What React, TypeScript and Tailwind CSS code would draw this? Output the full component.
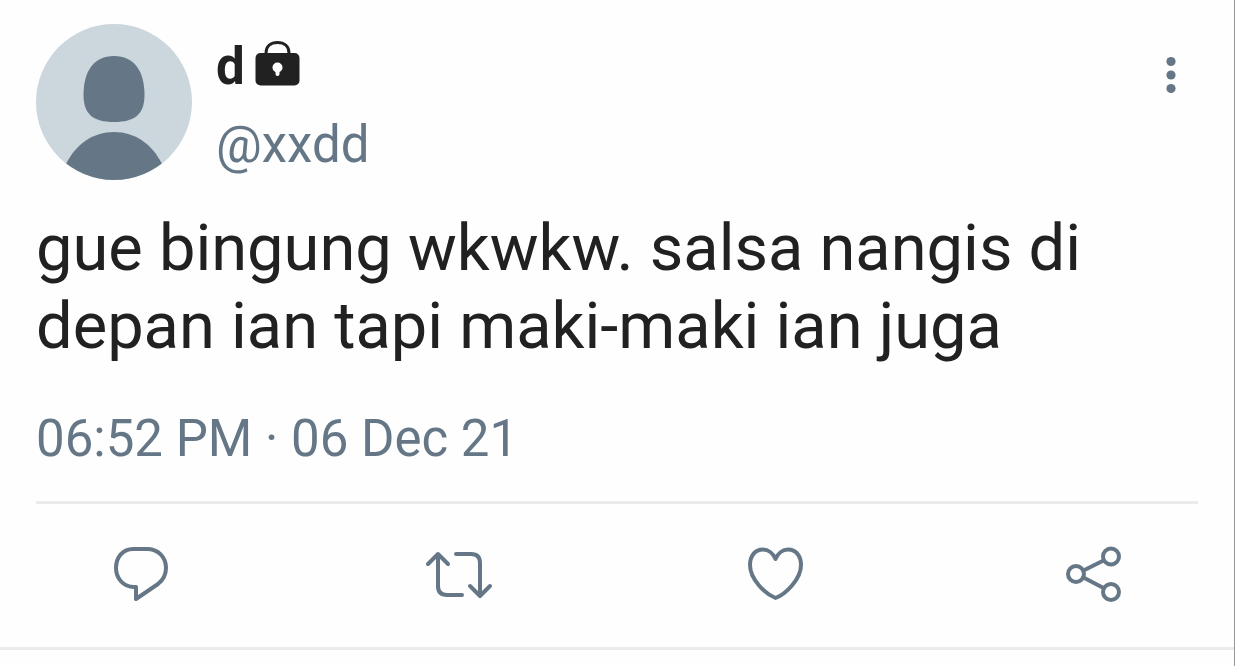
import React from "react";

interface ActionButtonProps {
  label: string;
  children: React.ReactNode;
}

const ActionButton: React.FC<ActionButtonProps> = ({ label, children }) => (
  <button type="button" aria-label={label} className="text-[#657786]">
    <svg
      viewBox="0 0 66 66"
      className="block h-[66px] w-[66px] overflow-visible"
      fill="none"
      stroke="currentColor"
      strokeWidth="4"
      strokeLinecap="round"
      strokeLinejoin="round"
      aria-hidden="true"
    >
      {children}
    </svg>
  </button>
);

const Avatar = () => (
  <svg
    viewBox="0 0 156 156"
    className="h-[156px] w-[156px] shrink-0 rounded-full"
    aria-hidden="true"
  >
    <rect width="156" height="156" fill="#ccd6dd" />
    <path
      d="M78 32C98 32 108.500 47 108.500 71C108.500 90 99 98 78 98C57 98 47.500 90 47.500 71C47.500 47 58 32 78 32Z"
      fill="#657786"
    />
    <path
      d="M30 140C40 120 57 108 78 108C99 108 116 120 126 140V156H30Z"
      fill="#657786"
    />
  </svg>
);

const LockIcon = () => (
  <svg viewBox="0 0 45 46" className="h-[46px] w-[45px]" aria-hidden="true">
    <path
      d="M11 14V13C11 6 16 2.500 22.500 2.500S34 6 34 13V14"
      fill="none"
      stroke="#212121"
      strokeWidth="3"
    />
    <rect x="0.500" y="13" width="44" height="32.500" rx="5" fill="#212121" />
    <circle cx="22.500" cy="27.500" r="5" fill="#fff" />
    <path d="M20.500 29h4v5a2 2 0 0 1-4 0z" fill="#fff" />
  </svg>
);

const App: React.FC = () => {
  return (
    <main className="min-h-screen border-r border-[#999999] bg-[#fefefe] font-['Roboto',sans-serif]">
      <article className="border-b-3 border-[#ebebeb] px-9 pt-6 pb-10">
        <header className="flex items-start">
          <Avatar />
          <div className="ml-6 flex-1 pt-1 text-[51px] leading-[78px]">
            <div className="flex items-center gap-2.5 text-[#212121]">
              <span className="font-bold">d</span>
              <span className="-mt-2">
                <LockIcon />
              </span>
            </div>
            <div className="text-[#657786]">@xxdd</div>
          </div>
          <button
            type="button"
            aria-label="More"
            className="mt-8 mr-5 text-[#657786]"
          >
            <svg
              viewBox="0 0 14 38"
              className="block h-[38px] w-[14px]"
              fill="currentColor"
              aria-hidden="true"
            >
              <circle cx="7" cy="5.500" r="4.600" />
              <circle cx="7" cy="19" r="4.600" />
              <circle cx="7" cy="32.500" r="4.600" />
            </svg>
          </button>
        </header>

        <p className="mt-[25px] text-[65px] leading-[78px] text-[#212121]">
          gue bingung wkwkw. salsa nangis di depan ian tapi maki-maki ian juga
        </p>

        <time className="mt-11 block text-[51px] leading-[60px] text-[#657786]">
          06:52 PM · 06 Dec 21
        </time>

        <div className="mt-8 flex justify-between border-t-3 border-[#ebebeb] px-[72px] pt-[37px]">
          <ActionButton label="Reply">
            <path d="M25 8H39C50 8 58 16 58 27C58 34 55 39 50 43L28 58V46H26C15 46 8 37 8 27C8 16 15 8 25 8Z" />
          </ActionButton>
          <ActionButton label="Retweet">
            <path d="M3 23L13 13L23 23M13 13V45Q13 54 22 54H37" />
            <path d="M31 13H46Q55 13 55 22V55M45 45L55 55L65 45" />
          </ActionButton>
          <ActionButton label="Like">
            <path d="M32.500 18C30 12 25 8.500 20 8.500C12 8.500 7 15 7 24C7 38 22 53 32.500 57C43 53 58 38 58 24C58 15 53 8.500 45 8.500C40 8.500 35 12 32.500 18Z" />
          </ActionButton>
          <ActionButton label="Share">
            <circle cx="16" cy="33" r="8" />
            <circle cx="51" cy="15.500" r="8" />
            <circle cx="51" cy="51" r="8" />
            <path d="M23.500 29.500L43.500 19.500M23.500 36.500L43.500 47" />
          </ActionButton>
        </div>
      </article>
    </main>
  );
};

export default App;
